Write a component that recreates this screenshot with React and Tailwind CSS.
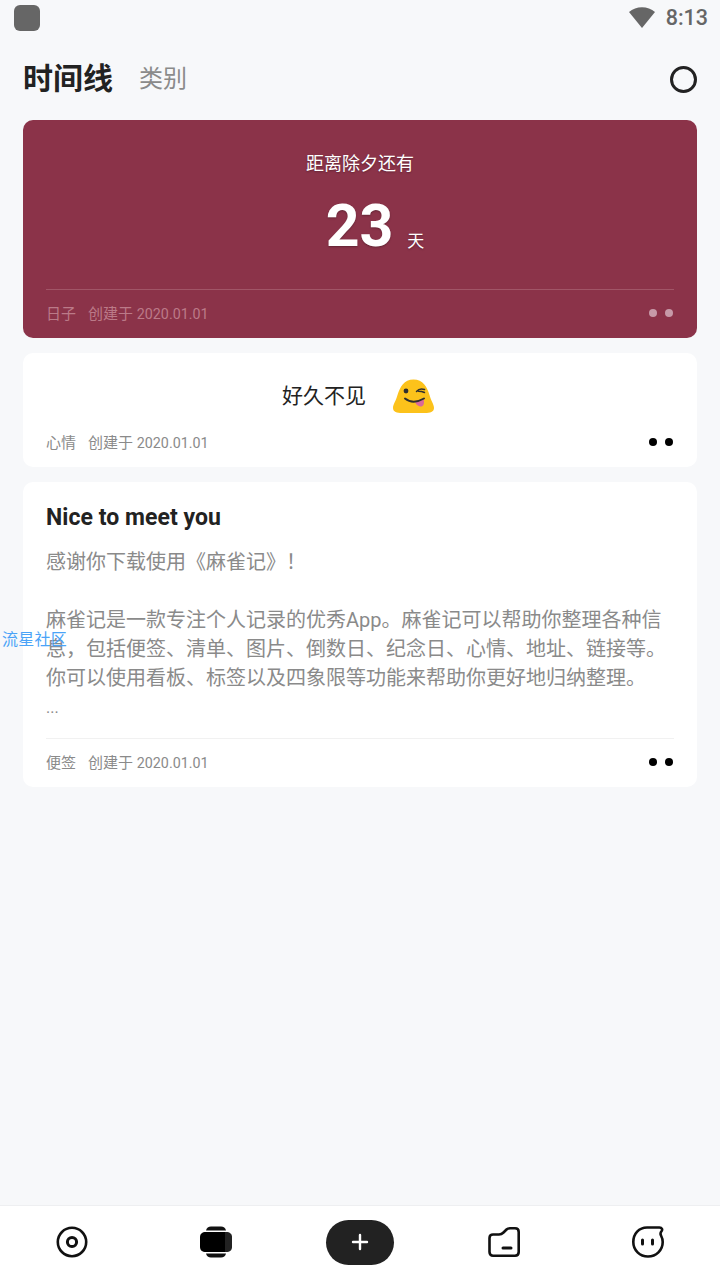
import { Plus } from 'lucide-react';

const FONT = "font-['Roboto','Noto_Sans_CJK_SC',sans-serif]";

function WinkEmoji() {
    return (
        <svg width="41" height="35" viewBox="0 0 41 35">
            <path d="M20.5 0.5C30 0.5 34 8 36.5 16C38 22 41 25 41 29C41 33 37 34 32 34H9C4 34 0 33 0 29C0 25 3 22 4.5 16C7 8 11 0.5 20.5 0.5Z" fill="#fcc21b" />
            <circle cx="13" cy="12" r="2.4" fill="#2f2f2f" />
            <path d="M23.5 12.5C25.5 10 28.5 9.5 31.5 10.5M25.5 12.2C27.5 12.2 29.500 12.600 31.500 13.500" fill="none" stroke="#2f2f2f" strokeWidth="1.5" strokeLinecap="round" />
            <path d="M22 22.5L30.5 20C32 25 30 28 27 27.5C24.5 27 22.5 25 22 22.5Z" fill="#d9689a" />
            <path d="M12 19.5C17 23.5 24 23.5 31 19.5" fill="none" stroke="#2f2f2f" strokeWidth="2" strokeLinecap="round" />
        </svg>
    );
}

function Dots({ className }) {
    return (
        <div className="flex gap-[8px] pr-[1px] pb-[2px]">
            <span className={`w-[8px] h-[8px] rounded-full ${className}`} />
            <span className={`w-[8px] h-[8px] rounded-full ${className}`} />
        </div>
    );
}

function CardFooter({ type, muted }) {
    return (
        <div className="flex items-center justify-between">
            <div className={`flex gap-[12px] text-[15px] leading-[20px] ${muted ? 'text-[#bb7a88]' : 'text-[#8a8a8a]'}`}>
                <span>{type}</span>
                <span>创建于 <span className="text-[14.3px]">2020.01.01</span></span>
            </div>
            <Dots className={muted ? 'bg-[#c79aa8]' : 'bg-black'} />
        </div>
    );
}

function NavIcon({ children }) {
    return <div className="w-[36px] h-[36px] flex items-center justify-center">{children}</div>;
}

export default function App() {
    return (
        <div className={`relative min-h-[1280px] flex flex-col bg-[#f7f8fa] ${FONT}`}>
            {/* status bar */}
            <div className="h-[36px] flex items-center justify-between pl-[14px] pr-[12px]">
                <div className="w-[26px] h-[26px] rounded-[6px] bg-[#666666]" />
                <div className="flex items-center gap-[11px]">
                    <svg width="26" height="22" viewBox="0 0 26 22">
                        <path d="M0 5C7-1.5 19-1.5 26 5L13 21Z" fill="#666666" />
                    </svg>
                    <span className="text-[21.5px] leading-[24px] font-medium text-[#666666]">8:13</span>
                </div>
            </div>

            {/* header */}
            <div className="h-[84px] pt-[2px] flex items-center justify-between px-[23px]">
                <div className="flex items-center gap-[26px]">
                    <span className="text-[30px] leading-[40px] font-bold text-[#222222]">时间线</span>
                    <span className="text-[24px] leading-[32px] text-[#8a8a8a]">类别</span>
                </div>
                <div className="w-[27px] h-[27px] rounded-full border-[3px] border-[#222222]" />
            </div>

            {/* cards */}
            <div className="flex flex-col gap-[15px] px-[23px]">
                <div className="h-[218px] rounded-[10px] bg-[#8b3349] px-[23px] pt-[31px] flex flex-col">
                    <div className="text-center text-[18px] leading-[26px] text-white [text-shadow:0_1px_2px_rgba(0,0,0,0.3)]">距离除夕还有</div>
                    <div className="mt-[14px] h-[70px] flex items-end justify-center gap-[14px] pl-[30px] text-white [text-shadow:0_1px_2px_rgba(0,0,0,0.3)]">
                        <span className="text-[59px] leading-[70px] font-bold">23</span>
                        <span className="text-[17px] leading-[24px] mb-[8px]">天</span>
                    </div>
                    <div className="mt-[28px] border-t border-[#a15567] pt-[14px]">
                        <CardFooter type="日子" muted />
                    </div>
                </div>

                <div className="h-[114px] rounded-[10px] bg-white px-[23px] pt-[24px] flex flex-col">
                    <div className="h-[38px] flex items-center justify-center gap-[27px] pr-[4px]">
                        <span className="text-[21px] leading-[30px] text-[#222222]">好久不见</span>
                        <WinkEmoji />
                    </div>
                    <div className="mt-[18px]">
                        <CardFooter type="心情" />
                    </div>
                </div>

                <div className="h-[305px] rounded-[10px] bg-white px-[23px] pt-[20px] flex flex-col">
                    <div className="text-[23px] leading-[30px] mt-[1px] font-bold tracking-[0.05px] text-[#222222]">Nice to meet you</div>
                    <div className="mt-[15px] text-[20px] leading-[29px] text-[#8a8a8a]">
                        <p>感谢你下载使用《麻雀记》！</p>
                        <p className="mt-[29px]">麻雀记是一款专注个人记录的优秀App。麻雀记可以帮助你整理各种信息，包括便签、清单、图片、倒数日、纪念日、心情、地址、链接等。你可以使用看板、标签以及四象限等功能来帮助你更好地归纳整理。</p>
                        <p className="text-[16px]">...</p>
                    </div>
                    <div className="mt-[16px] border-t border-[#f1f1f1] pt-[14px]">
                        <CardFooter type="便签" />
                    </div>
                </div>
            </div>

            {/* bottom nav */}
            <div className="mt-auto h-[75px] pb-[2px] bg-white border-t border-[#eeeff1] grid grid-cols-5 items-center justify-items-center">
                <NavIcon>
                    <svg width="32" height="32" viewBox="0 0 32 32" fill="none" stroke="#111111" strokeWidth="2.6">
                        <circle cx="16" cy="16" r="14.2" />
                        <circle cx="16" cy="16" r="4.6" strokeWidth="3" />
                    </svg>
                </NavIcon>
                <NavIcon>
                    <svg width="32" height="32" viewBox="0 0 32 32">
                        <path d="M6 4.5C6.5 2 8.5 0.5 11 0.5H21C23.500 0.500 25.500 2 26 4.500ZM6 27.500H26C25.500 30 23.500 31.500 21 31.500H11C8.500 31.500 6.500 30 6 27.500Z" fill="#111111" />
                        <path d="M6 6H25V26H6C2 26 0 24 0 21V11C0 8 2 6 6 6Z" fill="#000000" />
                        <path d="M25 6H26C30 6 32 8 32 11V21C32 24 30 26 26 26H25Z" fill="#222222" />
                    </svg>
                </NavIcon>
                <div className="w-[68px] h-[45px] rounded-full bg-[#222222] flex items-center justify-center">
                    <Plus className="w-[24px] h-[24px] text-white" strokeWidth={2.4} />
                </div>
                <NavIcon>
                    <svg width="32" height="30" viewBox="0 0 32 30" fill="none" stroke="#111111" strokeWidth="2.6" strokeLinejoin="round" strokeLinecap="round">
                        <path d="M1.5 11C1.5 8.500 3 7.500 5 7.500H11C13 7.500 14 7 15.500 5.500L18.500 2.500C19.500 1.500 20.500 1.300 22 1.300H27C29.500 1.300 30.700 2.500 30.700 5V25C30.700 27.500 29.500 28.700 27 28.700H5C3 28.700 1.500 27.500 1.500 25Z" />
                        <path d="M15 21H23" strokeWidth="3" />
                    </svg>
                </NavIcon>
                <NavIcon>
                    <svg width="32" height="32" viewBox="0 0 32 32" fill="none" stroke="#111111" strokeWidth="2.6" strokeLinecap="round">
                        <path d="M15 1.500H27.500C30 1.500 30.800 3.500 29.500 5.200C28.200 6.800 28 7.500 29 9.500C30.200 11.800 30.700 13.500 30.700 16C30.700 24.200 24.200 30.500 16 30.500C7.800 30.500 1.300 24.200 1.300 16C1.300 7.800 7 1.500 15 1.500Z" />
                        <path d="M10.500 14V18M20.500 14V18" strokeWidth="3" />
                    </svg>
                </NavIcon>
            </div>

            {/* floating watermark */}
            <span className="absolute left-[2px] top-[631px] text-[16px] leading-[18px] tracking-[0.25px] text-[#4aa3f7]">流星社区</span>
        </div>
    );
}
